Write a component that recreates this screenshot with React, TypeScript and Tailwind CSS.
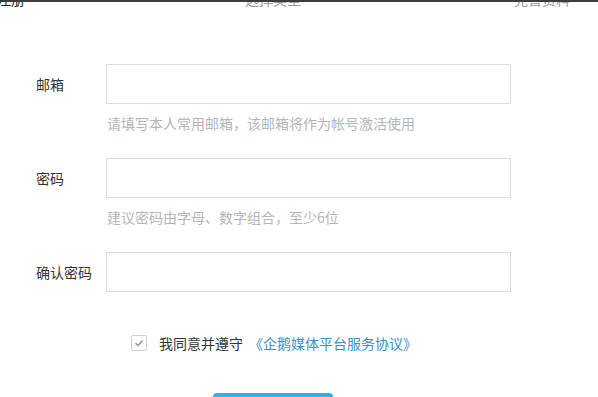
import React from 'react'

const FONT = "font-['Noto_Sans_CJK_SC','Noto_Sans',sans-serif]"

function Field({ label, hint, type = 'text' }: { label: string; hint?: string; type?: string }) {
  return (
    <div className={hint ? 'h-[94px]' : ''}>
      <div className="flex items-center">
        <label className="w-[70px] text-[14px] text-[#333]">{label}</label>
        <input
          type={type}
          className="w-[405px] h-[40px] border border-[#dcdcdc] bg-white outline-none px-3"
        />
      </div>
      {hint && (
        <p className="ml-[71px] mt-[9px] leading-[20px] text-[14px] text-[#b2b6bb]">{hint}</p>
      )}
    </div>
  )
}

export default function App() {
  return (
    <div className={`w-[598px] h-[397px] overflow-hidden bg-white ${FONT}`}>
      {/* step header, mostly scrolled out of view */}
      <div className="h-[8px] overflow-hidden border-t-[2px] border-[#3c3c3c]">
        <div className="flex -mt-[11px] text-[14px] leading-[16px]">
          <span className="-ml-[31px] w-[56px] text-[#222]">邮箱注册</span>
          <span className="ml-[220px] w-[56px] text-[#999]">选择类型</span>
          <span className="ml-[213px] w-[56px] text-[#999]">完善资料</span>
        </div>
      </div>

      <form className="pt-[56px] pl-[36px]">
        <Field label="邮箱" hint="请填写本人常用邮箱，该邮箱将作为帐号激活使用" />
        <Field label="密码" type="password" hint="建议密码由字母、数字组合，至少6位" />
        <Field label="确认密码" type="password" />

        <div className="mt-[41px] h-[20px] flex items-center ml-[95px] text-[14px]">
          <span className="w-[16px] h-[16px] border border-[#cfcfcf] rounded-[2px] flex items-center justify-center bg-white">
            <svg width="10" height="10" viewBox="0 0 10 10">
              <path d="M1.5 5.2 L4 7.5 L8.5 2.5" fill="none" stroke="#9a9a9a" strokeWidth="1.6" />
            </svg>
          </span>
          <span className="ml-[12px] text-[#333]">我同意并遵守</span>
          <a className="ml-[6px] text-[#3a8fc2] cursor-pointer">《企鹅媒体平台服务协议》</a>
        </div>

        <div className="mt-[40px] ml-[177px]">
          <button type="button" className="w-[120px] h-[40px] rounded-[4px] bg-[#2db1ec] text-white text-[14px]">
            下一步
          </button>
        </div>
      </form>
    </div>
  )
}
